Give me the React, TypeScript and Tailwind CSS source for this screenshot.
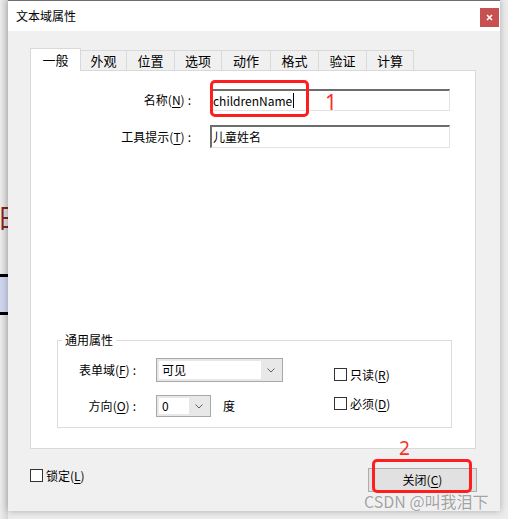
import React from "react";

const Chevron = () => (
  <svg width="8" height="5" viewBox="0 0 8 5" className="block">
    <polyline points="0.5,0.5 4,4 7.5,0.5" fill="none" stroke="#606060" strokeWidth="1" />
  </svg>
);

const Check = ({ label, k, className = "" }: { label: string; k: string; className?: string }) => (
  <div className={`flex items-center h-[13px] ${className}`}>
    <div className="w-[13px] h-[13px] border border-[#333333] bg-white shrink-0" />
    <span className="ml-[3px] leading-[16px] whitespace-nowrap">
      {label}(<span className="underline underline-offset-2">{k}</span>)
    </span>
  </div>
);

const Label = ({ text, k, w }: { text: string; k: string; w: string }) => (
  <div className={`${w} text-right leading-[16px] whitespace-nowrap shrink-0`}>
    {text}(<span className="underline underline-offset-2">{k}</span>)<span className="ml-[3px]">:</span>
  </div>
);

const tabs: [string, string][] = [
  ["外观", "w-[46px]"],
  ["位置", "w-[48px]"],
  ["选项", "w-[47px]"],
  ["动作", "w-[49px]"],
  ["格式", "w-[48px]"],
  ["验证", "w-[48px]"],
  ["计算", "w-[47px]"],
];

export default function App() {
  return (
    <div className="relative w-[508px] h-[519px] bg-[#ececec] flex overflow-hidden font-['Noto_Sans_CJK_SC','Noto_Sans',sans-serif] text-[12px] text-black">
      {/* background application strip */}
      <div className="w-[8px] h-full shrink-0 bg-gradient-to-r from-[#ececec] to-[#d6d6d6] overflow-hidden flex flex-col">
        <div className="h-[203px] shrink-0" />
        <div className="text-[#8b1c1c] text-[26px] leading-[28px] ml-[-3px] shrink-0">日</div>
        <div className="h-[43px] shrink-0" />
        <div className="h-[41px] shrink-0 bg-[#cdd4ec] border-y-[3px] border-black" />
      </div>

      {/* dialog window */}
      <div className="w-[492px] h-[511px] shrink-0 flex flex-col bg-[#f0f0f0] border-t border-[#6e6e6e] shadow-[0_0_7px_rgba(0,0,0,0.28)] z-10">
        {/* title bar */}
        <div className="h-[30px] bg-white flex justify-between shrink-0">
          <div className="pl-[8px] pt-[7px] leading-[16px]">文本域属性</div>
          <div className="mt-[7px] mr-[1px] w-[19px] h-[19px] bg-[#c75050] flex items-center justify-center">
            <svg width="7" height="7" viewBox="0 0 7 7">
              <path d="M1 1 L6 6 M6 1 L1 6" stroke="white" strokeWidth="1.6" />
            </svg>
          </div>
        </div>

        {/* body */}
        <div className="flex-1 pl-[22px] pt-[17px] flex flex-col">
          {/* tab strip */}
          <div className="flex items-end h-[22px] text-[13px]">
            <div className="relative z-10 w-[51px] h-[23px] mb-[-1px] bg-white border border-b-0 border-[#d9d9d9] flex items-center justify-center leading-[16px]">
              一般
            </div>
            {tabs.map(([t, w]) => (
              <div
                key={t}
                className={`${w} h-[20px] border-t border-r border-[#d9d9d9] bg-[#f0f0f0] flex items-center justify-center leading-[16px]`}
              >
                {t}
              </div>
            ))}
          </div>

          {/* tab panel */}
          <div className="w-[446px] h-[379px] bg-white border border-[#d9d9d9] flex flex-col pt-[18px]">
            <div className="flex items-center h-[22px]">
              <Label text="名称" k="N" w="w-[160px]" />
              <div className="ml-[19px] w-[240px] h-[22px] border-t-2 border-l-2 border-b border-r border-t-[#6d6d6d] border-l-[#6d6d6d] border-b-[#e3e3e3] border-r-[#e3e3e3] flex items-center pl-[1px]">
                <span className="leading-[16px]">childrenName</span>
                <span className="w-[1px] h-[15px] bg-black ml-[1px]" />
              </div>
            </div>
            <div className="flex items-center h-[23px] mt-[14px]">
              <Label text="工具提示" k="T" w="w-[160px]" />
              <div className="ml-[19px] w-[240px] h-[23px] border-t-2 border-l-2 border-b border-r border-t-[#6d6d6d] border-l-[#6d6d6d] border-b-[#e3e3e3] border-r-[#e3e3e3] flex items-center pl-[1px]">
                <span className="leading-[16px]">儿童姓名</span>
              </div>
            </div>

            {/* group box */}
            <div className="relative mt-[192px] ml-[26px] w-[395px] h-[88px] border border-[#dcdcdc] flex pt-[17px]">
              <div className="absolute left-[4px] top-[-9px] bg-white px-[3px] leading-[16px]">通用属性</div>
              <div className="flex flex-col">
                <div className="flex items-center h-[24px]">
                  <Label text="表单域" k="F" w="w-[78px]" />
                  <div className="ml-[20px] w-[127px] h-[24px] border border-[#a8a8a8] bg-[#e8e8e8] flex p-[2px]">
                    <div className="flex-1 bg-white flex items-center pl-[3px] leading-[16px]">可见</div>
                    <div className="w-[19px] flex items-center justify-center">
                      <Chevron />
                    </div>
                  </div>
                </div>
                <div className="flex items-center h-[22px] mt-[13px]">
                  <Label text="方向" k="O" w="w-[78px]" />
                  <div className="ml-[20px] w-[55px] h-[22px] border border-[#a8a8a8] bg-[#e8e8e8] flex p-[2px]">
                    <div className="flex-1 bg-white flex items-center pl-[3px] leading-[16px]">0</div>
                    <div className="w-[19px] flex items-center justify-center">
                      <Chevron />
                    </div>
                  </div>
                  <span className="ml-[12px] leading-[16px]">度</span>
                </div>
              </div>
              <div className="ml-[51px] pt-[10px] flex flex-col">
                <Check label="只读" k="R" />
                <Check label="必须" k="D" className="mt-[16px]" />
              </div>
            </div>
          </div>

          {/* bottom row */}
          <div className="w-[447px] mt-[19px] flex justify-between items-start">
            <Check label="锁定" k="L" className="mt-[1px]" />
            <div className="w-[109px] h-[24px] bg-[#e1e1e1] border border-[#adadad] flex items-center justify-center leading-[16px]">
              关闭(<span className="underline underline-offset-2">C</span>)
            </div>
          </div>
        </div>
      </div>

      {/* annotations */}
      <div className="absolute left-[210px] top-[80px] w-[99px] h-[37px] border-[3px] border-[#ff1e1e] rounded-[5px] z-20" />
      <div className="absolute left-[325px] top-[90px] text-[21px] leading-[24px] text-[#f8302a] z-20 font-['Noto_Sans',sans-serif]">1</div>
      <div className="absolute left-[372px] top-[459px] w-[100px] h-[34px] border-[3px] border-[#ff1e1e] rounded-[5px] z-20" />
      <div className="absolute left-[399px] top-[437px] text-[19px] leading-[22px] text-[#f8302a] z-20 font-['Noto_Sans',sans-serif]">2</div>
      <div className="absolute left-[364px] top-[491px] text-[16px] leading-[20px] text-[#8a8a8a]/80 z-20 whitespace-nowrap [text-shadow:0_0_1px_#ffffff]">
        CSDN @叫我泪下
      </div>
    </div>
  );
}
